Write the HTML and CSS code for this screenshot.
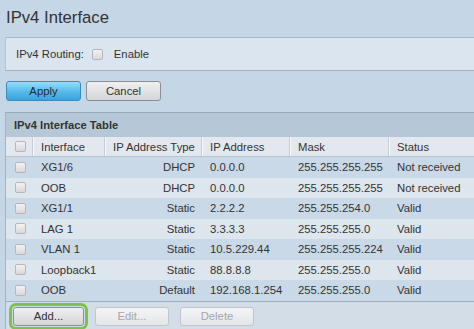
FILE: index.html
```html
<!DOCTYPE html>
<html>
<head>
<meta charset="utf-8">
<link rel="stylesheet" href="styles.css">
</head>
<body>
<h1 class="title">IPv4 Interface</h1>
<div class="panel">
  <span class="label">IPv4 Routing:</span>
  <span class="cb"></span>
  <span class="label">Enable</span>
</div>
<div class="actions">
  <button class="btn btn-primary">Apply</button>
  <button class="btn">Cancel</button>
</div>
<div class="tablebox">
  <div class="tabletitle">IPv4 Interface Table</div>
  <div class="row head">
    <div class="c chk"><span class="cb"></span></div>
    <div class="c">Interface</div>
    <div class="c">IP Address Type</div>
    <div class="c">IP Address</div>
    <div class="c">Mask</div>
    <div class="c">Status</div>
  </div>
  <div class="row odd">
    <div class="c chk"><span class="cb"></span></div>
    <div class="c">XG1/6</div><div class="c r">DHCP</div><div class="c">0.0.0.0</div><div class="c">255.255.255.255</div><div class="c">Not received</div>
  </div>
  <div class="row even">
    <div class="c chk"><span class="cb"></span></div>
    <div class="c">OOB</div><div class="c r">DHCP</div><div class="c">0.0.0.0</div><div class="c">255.255.255.255</div><div class="c">Not received</div>
  </div>
  <div class="row odd">
    <div class="c chk"><span class="cb"></span></div>
    <div class="c">XG1/1</div><div class="c r">Static</div><div class="c">2.2.2.2</div><div class="c">255.255.254.0</div><div class="c">Valid</div>
  </div>
  <div class="row even">
    <div class="c chk"><span class="cb"></span></div>
    <div class="c">LAG 1</div><div class="c r">Static</div><div class="c">3.3.3.3</div><div class="c">255.255.255.0</div><div class="c">Valid</div>
  </div>
  <div class="row odd">
    <div class="c chk"><span class="cb"></span></div>
    <div class="c">VLAN 1</div><div class="c r">Static</div><div class="c">10.5.229.44</div><div class="c">255.255.255.224</div><div class="c">Valid</div>
  </div>
  <div class="row even">
    <div class="c chk"><span class="cb"></span></div>
    <div class="c">Loopback1</div><div class="c r">Static</div><div class="c">88.8.8.8</div><div class="c">255.255.255.0</div><div class="c">Valid</div>
  </div>
  <div class="row odd">
    <div class="c chk"><span class="cb"></span></div>
    <div class="c">OOB</div><div class="c r">Default</div><div class="c">192.168.1.254</div><div class="c">255.255.255.0</div><div class="c">Valid</div>
  </div>
  <div class="toolbar">
    <button class="btn btn-focus">Add...</button>
    <button class="btn btn-disabled">Edit...</button>
    <button class="btn btn-disabled">Delete</button>
  </div>
</div>
</body>
</html>
```
FILE: styles.css
```css
html, body {
  margin: 0;
  padding: 0;
  background: #c5d6e6;
  font-family: "Liberation Sans", Arial, sans-serif;
  color: #333;
  overflow: hidden;
}
.title {
  margin: 0;
  height: 37px;
  padding: 8px 0 0 6px;
  box-sizing: border-box;
  font-size: 16.7px;
  line-height: 20px;
  font-weight: normal;
  color: #333;
}
.panel {
  margin-left: 5px;
  height: 34px;
  box-sizing: border-box;
  background: #dbe5ef;
  border-top: 1px solid #a6b6c5;
  border-bottom: 1px solid #a3b1bf;
  border-left: 1px solid #b7c5d3;
  display: flex;
  align-items: center;
  padding-left: 10px;
  gap: 0;
}
.label {
  font-size: 11.3px;
  color: #333;
}
.panel .cb {
  margin: 0 11px 0 8px;
}
.cb {
  display: inline-block;
  width: 9px;
  height: 9px;
  border: 1px solid #b4b8bc;
  border-radius: 2px;
  background: linear-gradient(#f2f2f2, #d9d9d9);
}
.actions {
  display: flex;
  gap: 5px;
  padding: 10px 0 0 6px;
}
.btn {
  width: 75px;
  height: 20px;
  box-sizing: border-box;
  padding: 0;
  border: 1px solid #8a8f95;
  border-radius: 3px;
  background: linear-gradient(#f0f0f0, #d3d5d8);
  font-family: "Liberation Sans", Arial, sans-serif;
  font-size: 11.3px;
  color: #333;
}
.btn-primary {
  border-color: #3a8cbf;
  background: linear-gradient(#9adcf8, #55b9ea 55%, #3aa3dc);
  color: #1f2a33;
}
.tablebox {
  margin: 11px 0 0 5px;
  border-left: 1px solid #a3b3c2;
  border-top: 1px solid #97a9b9;
}
.tabletitle {
  height: 24px;
  box-sizing: border-box;
  background: #b6c7d7;
  font-weight: bold;
  font-size: 11.2px;
  line-height: 24px;
  padding-left: 8px;
  color: #333;
}
.row {
  display: grid;
  grid-template-columns: 27px 72px 97px 88px 99px 1fr;
  height: 20.5px;
  font-size: 11.3px;
  align-items: center;
}
.row.head {
  height: 20px;
  background: #e3e8ee;
  border-bottom: 1px solid #b9c4ce;
  box-sizing: border-box;
}
.row.head .c {
  height: 100%;
  display: flex;
  align-items: center;
  border-right: 1px solid #c4ccd4;
  box-shadow: 1px 0 0 #f7f9fb;
}
.row.head .c:last-child {
  border-right: none;
  box-shadow: none;
}
.row.odd {
  background: #cad9e8;
}
.row.even {
  background: #dde5ed;
}
.c {
  padding-left: 8px;
  padding-right: 7px;
  white-space: nowrap;
}
.c.r {
  text-align: right;
}
.c.chk {
  padding-left: 9px;
  padding-right: 0;
  display: flex;
  align-items: center;
}
.toolbar {
  border-top: 1px solid #9eaebe;
  background: #d2dde8;
  height: 29px;
  display: flex;
  align-items: flex-start;
  gap: 11px;
  padding: 5px 0 0 6px;
  box-sizing: border-box;
}
.btn-focus {
  width: 71px;
  height: 19px;
  outline: 3px solid #7cc248;
  outline-offset: 1px;
  border-radius: 3px;
  margin-left: 1px;
}
.btn-disabled {
  width: 74px;
  height: 19px;
  border-color: #c2c6ca;
  background: linear-gradient(#f3f4f5, #e3e6e9);
  color: #a4a8ac;
}
```
